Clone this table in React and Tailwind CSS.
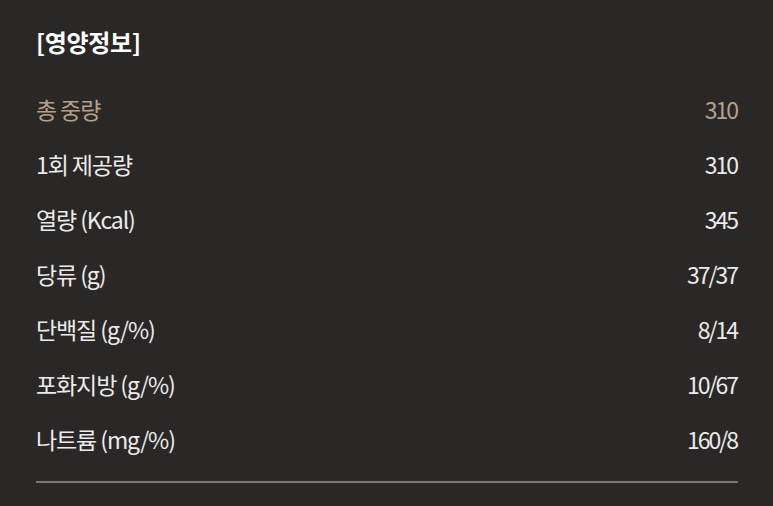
const rows = [
  ['총 중량', '310', true],
  ['1회 제공량', '310'],
  ['열량 (Kcal)', '345'],
  ['당류 (g)', '37/37'],
  ['단백질 (g/%)', '8/14'],
  ['포화지방 (g/%)', '10/67'],
  ['나트륨 (mg/%)', '160/8'],
];

export default function App() {
  return (
    <div
      className="w-[773px] h-[506px] bg-[#2a2826] px-[36px] pt-[26px] text-[#ecebe9]"
      style={{ fontFamily: '"Noto Sans CJK KR", "Noto Sans", sans-serif' }}
    >
      <h2 className="text-[24px] font-bold leading-[32px] tracking-[-0.3px] text-white">[영양정보]</h2>
      <ul className="mt-[24px]">
        {rows.map(([label, value, accent]) => (
          <li
            key={label}
            className={`flex h-[55px] items-center justify-between text-[23px] ${
              accent ? 'text-[#b5a188]' : 'text-[#ecebe9]'
            }`}
          >
            <span className="tracking-[-1.1px]">{label}</span>
            <span className="tracking-[-2px]">{value}</span>
          </li>
        ))}
      </ul>
      <div className="mt-[14px] h-[2px] w-[702px] bg-[#7a7876]" />
    </div>
  );
}
